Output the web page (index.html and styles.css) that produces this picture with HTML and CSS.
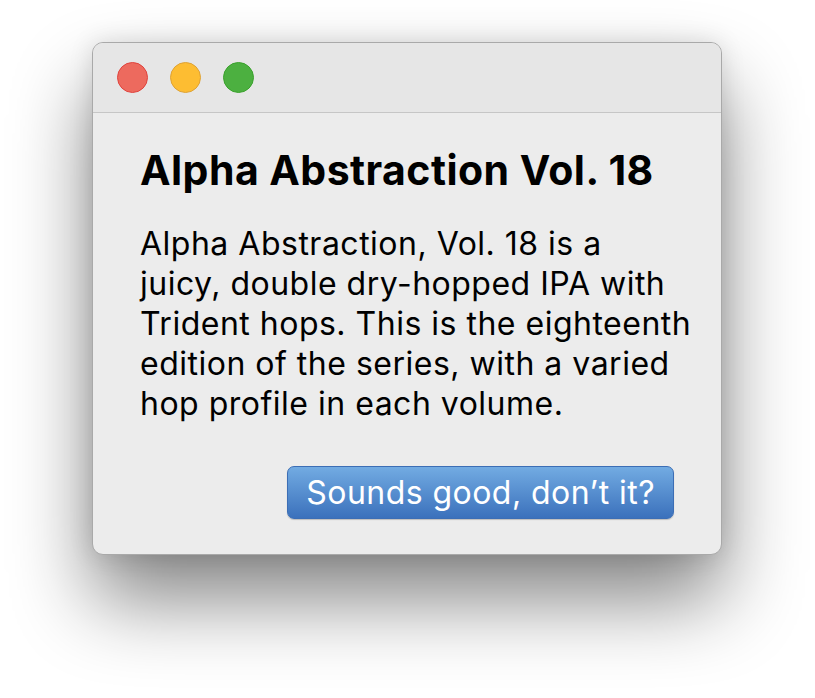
FILE: index.html
```html
<!DOCTYPE html>
<html>
<head>
<meta charset="utf-8">
<link rel="stylesheet" href="styles.css">
</head>
<body>
<div class="window">
  <div class="titlebar">
    <span class="light red"></span>
    <span class="light yellow"></span>
    <span class="light green"></span>
  </div>
  <div class="content">
    <h1 class="title">Alpha Abstraction Vol. 18</h1>
    <p class="desc">Alpha Abstraction, Vol. 18 is a<br>juicy, double dry-hopped IPA with<br>Trident hops. This is the eighteenth<br>edition of the series, with a varied<br>hop profile in each volume.</p>
    <div class="actions">
      <button class="btn">Sounds good, don’t it?</button>
    </div>
  </div>
</div>
</body>
</html>
```
FILE: styles.css
```css
html, body {
  margin: 0;
  padding: 0;
  background: #ffffff;
}
body {
  min-height: 698px;
  box-sizing: border-box;
  padding: 42px 0 0 92px;
  font-family: Inter, "Noto Sans", sans-serif;
}
.window {
  width: 630px;
  height: 513px;
  box-sizing: border-box;
  border-radius: 11px;
  border: 1px solid #a9a9a9;
  background: #ececec;
  overflow: hidden;
  box-shadow: 0 0 24px rgba(0,0,0,0.12), 0 45px 80px rgba(0,0,0,0.48);
  display: flex;
  flex-direction: column;
}
.titlebar {
  height: 70px;
  flex: none;
  background: #e6e6e6;
  border-bottom: 1px solid #c6c6c6;
  display: flex;
  align-items: center;
  gap: 22px;
  padding-left: 24px;
  box-sizing: border-box;
}
.light {
  width: 31px;
  height: 31px;
  border-radius: 50%;
  box-sizing: border-box;
}
.red { background: #ed6a5e; border: 1px solid #e0443e; }
.yellow { background: #fdbd32; border: 1px solid #dea236; }
.green { background: #4cb040; border: 1px solid #3aa22c; }
.content {
  padding: 32px 10px 0 47px;
}
.title {
  margin: 0;
  font-size: 41px;
  font-weight: 700;
  line-height: 50px;
  color: #000;
  letter-spacing: 0.45px;
}
.desc {
  margin: 29px 0 0 0;
  font-size: 32px;
  line-height: 40px;
  color: #000;
  letter-spacing: 0.5px;
}
.actions {
  display: flex;
  justify-content: flex-end;
  margin-top: 42px;
  padding-right: 37px;
}
.btn {
  font-family: Inter, "Noto Sans", sans-serif;
  font-size: 32px;
  letter-spacing: 0.45px;
  color: #fff;
  height: 53px;
  padding: 0 18px;
  border: 1px solid #3c6eb5;
  border-radius: 7px;
  background: linear-gradient(#72abe2, #3b71bc);
  box-shadow: 0 1px 1px rgba(0,0,0,0.2);
}
```
